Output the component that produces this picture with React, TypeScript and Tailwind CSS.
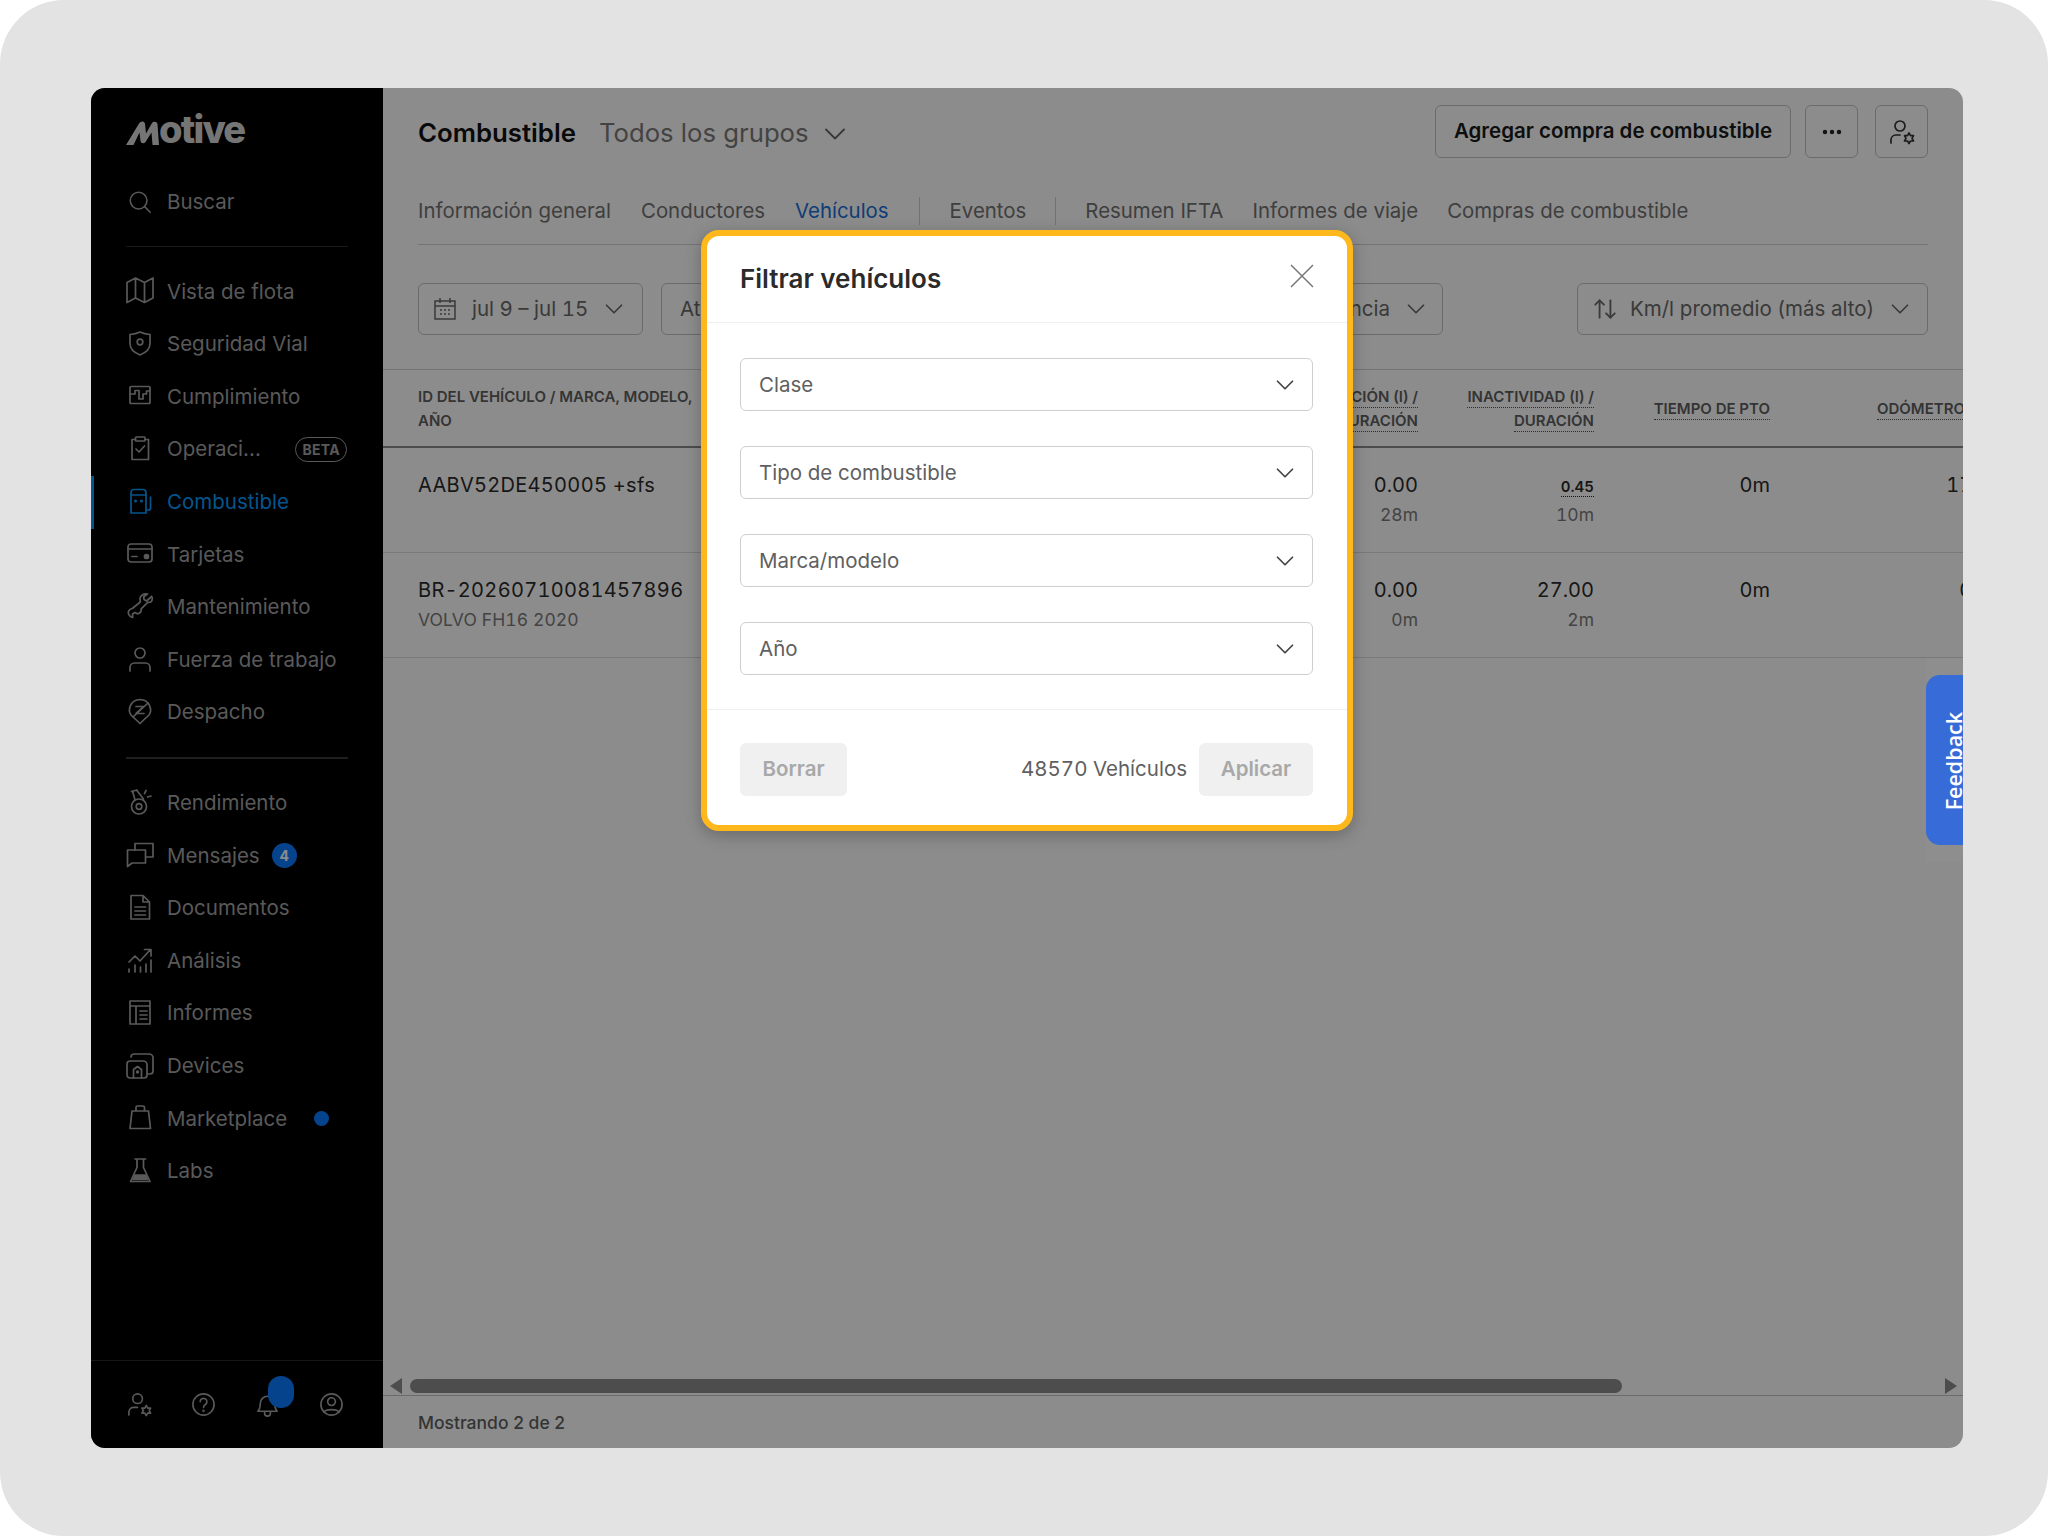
import type { ReactNode } from "react";
import { ChevronDown, ArrowUpDown, MoreHorizontal } from "lucide-react";

function Ico({ size = 28, children }: { size?: number; children: ReactNode }) {
  return (
    <svg
      width={size}
      height={size}
      viewBox="0 0 28 28"
      fill="none"
      stroke="currentColor"
      strokeWidth="1.7"
      strokeLinecap="round"
      strokeLinejoin="round"
    >
      {children}
    </svg>
  );
}

const icons: Record<string, ReactNode> = {
  map: (
    <path d="M1 6.500 9.500 2l9 4.500L27 2v20l-8.500 4.500-9-4.500L1 26.500zM9.500 2v20M18.500 6.500v20" />
  ),
  shield: (
    <>
      <path d="M4 5.500C10 5 12 4 14 3c2 1 4 2 10 2.500v9C24 20 19 24 14 26 9 24 4 20 4 14.500z" />
      <circle cx="14" cy="13" r="2.800" />
    </>
  ),
  compliance: (
    <>
      <rect x="4" y="4.500" width="20" height="17" rx="1" />
      <path d="M4 12h5V8.500h4V17h4v-5h3.500V9H24" />
    </>
  ),
  clipboard: (
    <>
      <path d="M9.500 5.500H6v20h16.500v-20H19" />
      <rect x="9.500" y="3" width="9.500" height="4" rx="0.800" />
      <path d="m10 15 3 3 5.500-6" />
    </>
  ),
  fuel: (
    <>
      <path d="M5 5.500A3 3 0 0 1 8 2.500h9a3 3 0 0 1 3 3v20.500H5zM5 8h15" />
      <path d="M20 23h2.500a2 2 0 0 0 2-2V10" />
      <circle cx="9.500" cy="14" r="0.700" />
      <circle cx="15.500" cy="14" r="0.700" />
    </>
  ),
  card: (
    <>
      <rect x="2" y="5" width="24" height="18" rx="3" />
      <path d="M2 10h24M6 17.500h5" />
      <circle cx="20.500" cy="17.500" r="2" fill="currentColor" />
    </>
  ),
  wrench: (
    <path d="M24.500 5.500 20.500 9 18 7.500l-.3-2.800 3.800-2.700c-3.500-.8-7 1-7.500 4.500-.2 1.500.3 2.500.3 3.500l-8 6.500c-3 .4-4.500 3-3.800 5.300.8 2.600 3.300 3.700 4.200 3.700l-.2-3.500 2.300-1.500 2.600 1.300c2.600-.4 4-2.300 3.800-5l6.500-6.500c3.300.8 6-2.500 3.800-6z" />
  ),
  user: (
    <>
      <circle cx="14" cy="8" r="5" />
      <path d="M4 26v-3.500A4.500 4.500 0 0 1 8.500 18h11a4.500 4.500 0 0 1 4.500 4.500V26" />
    </>
  ),
  dispatch: (
    <>
      <path d="M14 26.500 5 18C1.500 13 4 3 14 2.500 24 3 26.500 13 23 18z" />
      <path d="M10 9.500h8l-8 7h8M22 6 7 20" />
    </>
  ),
  medal: (
    <>
      <circle cx="13" cy="18.500" r="7.500" />
      <circle cx="13" cy="18.500" r="2.800" />
      <path d="M6.500 3 9 12M10.500 2l7 9M5.500 3.500 11 2M20 2.500l-1.500 3M25 8l-3.500 1" />
    </>
  ),
  messages: (
    <>
      <path d="M9 10V3.500h18v13.500h-7" />
      <path d="M1.500 10h18v13H6l-4.500 3.500z" />
    </>
  ),
  doc: (
    <path d="M5 2.500h12l6.500 6.500v17H5zM17 2.500V9h6.500M9 14h10.500M9 18h10.500M9 22h10.500" />
  ),
  chart: (
    <path d="m3 16 6-6 5 5 10-11M18.500 3.500H25V10M3 26v-3M9 26v-7M14.500 26v-5M20 26v-8M25 26V14" />
  ),
  table: (
    <path d="M4 3h20v23H4zM4 8h20M10 8v18M14 13h7M14 17h7M14 21h7" />
  ),
  devices: (
    <>
      <path d="M5 6a3 3 0 0 1 3-3h15a4 4 0 0 1 4 4v13a3 3 0 0 1-3 3h-2" />
      <path d="M1 13a3 3 0 0 1 3-3h13a4 4 0 0 1 4 4v10a3 3 0 0 1-3 3H4a3 3 0 0 1-3-3z" />
      <path d="M7.500 27v-8.500l4-3 4 3V27" />
      <circle cx="11.500" cy="21" r="0.800" />
    </>
  ),
  bag: (
    <path d="M6 8h16.500L24.500 25.500H4zM10 8V4.500a1.500 1.500 0 0 1 1.500-1.500h5.500a1.500 1.500 0 0 1 1.500 1.500V8" />
  ),
  flask: (
    <>
      <path d="M9 3h10.500M11 3v8.500L4.500 25.500h19.500L17.500 11.500V3" />
      <path d="M9 19h10.500l2 4.500H7z" fill="currentColor" />
    </>
  ),
  search: (
    <>
      <circle cx="12.500" cy="12.500" r="9" />
      <path d="m19 19 6 6" />
    </>
  ),
  help: (
    <>
      <circle cx="14" cy="14" r="11" />
      <path d="M10.500 11a3.500 3.500 0 1 1 5.500 3c-1.300.9-2 1.500-2 3" />
      <circle cx="14" cy="20.500" r="0.500" />
    </>
  ),
  bell: (
    <path d="M4 21c2-2 2.500-3.500 2.500-8a7.500 7.500 0 0 1 15 0c0 4.500.5 6 2.500 8zM11 21v2a3 3 0 0 0 6 0v-2" />
  ),
  account: (
    <>
      <circle cx="14" cy="14" r="11" />
      <circle cx="14" cy="11" r="4" />
      <path d="M6 22c2-3.500 14-3.500 16 0" />
    </>
  ),
  admin: (
    <>
      <circle cx="12" cy="8" r="5" />
      <path d="M3 25v-3.500A5 5 0 0 1 8 17h4" />
      <path d="m21 15 1.500 2.700h3l-1.500 2.600 1.500 2.700h-3L21 25.500 19.500 23h-3l1.500-2.700-1.500-2.600h3z" />
    </>
  ),
};

type NavItem = { icon: string; label: string; extra?: ReactNode; active?: boolean };

const mainNav: NavItem[] = [
  { icon: "map", label: "Vista de flota" },
  { icon: "shield", label: "Seguridad Vial" },
  { icon: "compliance", label: "Cumplimiento" },
  {
    icon: "clipboard",
    label: "Operaci...",
    extra: (
      <span className="ml-auto mr-[36px] rounded-full border border-[#a3a3a3] px-[6px] text-[14px] leading-[23px] font-bold tracking-[0.3px]">
        BETA
      </span>
    ),
  },
  { icon: "fuel", label: "Combustible", active: true },
  { icon: "card", label: "Tarjetas" },
  { icon: "wrench", label: "Mantenimiento" },
  { icon: "user", label: "Fuerza de trabajo" },
  { icon: "dispatch", label: "Despacho" },
];

const secondNav: NavItem[] = [
  { icon: "medal", label: "Rendimiento" },
  {
    icon: "messages",
    label: "Mensajes",
    extra: (
      <span className="ml-3 flex h-[25px] w-[25px] items-center justify-center rounded-full bg-[#0a7dff] text-[14px] font-bold text-white">
        4
      </span>
    ),
  },
  { icon: "doc", label: "Documentos" },
  { icon: "chart", label: "Análisis" },
  { icon: "table", label: "Informes" },
  { icon: "devices", label: "Devices" },
  {
    icon: "bag",
    label: "Marketplace",
    extra: <span className="ml-[27px] h-[15px] w-[15px] rounded-full bg-[#0a7dff]" />,
  },
  { icon: "flask", label: "Labs" },
];

function NavRow({ item }: { item: NavItem }) {
  return (
    <div
      className={`relative flex h-[52.6px] items-center pl-[35px] text-[20.5px] ${
        item.active ? "text-[#0a9bff]" : "text-[#a3a3a3]"
      }`}
    >
      {item.active && <span className="absolute top-0 left-0 h-full w-[3px] bg-[#0a9bff]" />}
      <span className="-mt-[3px] flex w-[28px] justify-center">
        <Ico>{icons[item.icon]}</Ico>
      </span>
      <span className="ml-[13px]">{item.label}</span>
      {item.extra}
    </div>
  );
}

function Sidebar() {
  return (
    <aside className="flex w-[292px] shrink-0 flex-col bg-black">
      <div className="flex h-[80px] shrink-0 items-start pt-[23px] pl-[35px] text-[#d6d6d6]">
        <div className="flex items-end">
          <svg width="33" height="25" viewBox="0 0 33 25" className="mb-[2px]" fill="currentColor">
            <path d="M0 25 13 3.500C14.500 1 18 .5 19 3.500l1 10L26 3c1.500-2 5-1.800 5.500 1L33 25h-6.500l-1-12.500-6 9.500c-1.500 2-4.500 1.500-5-1l-1-8.500L7.500 25z" />
          </svg>
          <span className="text-[38px] leading-[36px] font-extrabold tracking-[-1.8px]">otive</span>
        </div>
      </div>
      <div className="flex h-[68px] shrink-0 items-center pl-[35px] text-[20.5px] text-[#a3a3a3]">
        <span className="flex w-[28px] justify-center">
          <Ico size={26}>{icons.search}</Ico>
        </span>
        <span className="ml-[13px]">Buscar</span>
      </div>
      <div className="mt-[10px] ml-[35px] h-px w-[222px] shrink-0 bg-[#2f2f2f]" />
      <div className="mt-[18.700px]">
        {mainNav.map((n) => (
          <NavRow key={n.label} item={n} />
        ))}
      </div>
      <div className="my-[18px] ml-[35px] h-[2px] w-[222px] shrink-0 bg-[#3a3a3a]" />
      <div>
        {secondNav.map((n) => (
          <NavRow key={n.label} item={n} />
        ))}
      </div>
      <div className="mt-auto flex h-[88px] items-center gap-[37px] border-t border-[#2a2a2a] pl-[35px] text-[#a3a3a3]">
        <Ico size={27}>{icons.admin}</Ico>
        <Ico size={27}>{icons.help}</Ico>
        <div className="relative">
          <Ico size={27}>{icons.bell}</Ico>
          <span className="absolute -top-[15px] left-[14px] h-[32px] w-[26px] rounded-full bg-[#0a7dff]" />
        </div>
        <Ico size={27}>{icons.account}</Ico>
      </div>
    </aside>
  );
}

function Header({ className, children }: { className?: string; children: ReactNode }) {
  return (
    <div className={className}>
      <span className="border-b border-dotted border-[#555] pb-px">{children}</span>
    </div>
  );
}

function Main() {
  const tabClass = "text-[20.4px] text-[#737373]";
  const btn = "flex h-[52px] items-center rounded-[6px] border border-[#c4c4c4] bg-white";
  return (
    <main className="flex min-w-0 flex-1 flex-col overflow-hidden bg-white">
      <div className="flex h-[70px] shrink-0 items-end pr-[35px] pl-[35px]">
        <div className="mb-[5px] flex items-center">
          <span className="text-[25.800px] font-semibold text-[#111]">Combustible</span>
          <span className="ml-[23px] text-[25.700px] text-[#7a7a7a]">Todos los grupos</span>
          <ChevronDown className="ml-[8px] text-[#666]" size={36} strokeWidth={1.2} />
        </div>
        <div className="ml-auto flex gap-[14px]">
          <div className="flex h-[53px] w-[356px] items-center justify-center rounded-[6px] border border-[#c4c4c4] text-[20.5px] font-semibold text-[#1a1a1a]">
            Agregar compra de combustible
          </div>
          <div className="flex h-[53px] w-[53px] items-center justify-center rounded-[6px] border border-[#c4c4c4] text-[#222]">
            <MoreHorizontal size={24} strokeWidth={2.4} />
          </div>
          <div className="ml-[3px] flex h-[53px] w-[53px] items-center justify-center rounded-[6px] border border-[#c4c4c4] text-[#333]">
            <Ico size={28}>{icons.admin}</Ico>
          </div>
        </div>
      </div>

      <div className="mx-[35px] mt-[20px] flex h-[67px] shrink-0 items-center border-b border-[#d4d4d4]">
        <span className={tabClass}>Información general</span>
        <span className={`${tabClass} ml-[30px]`}>Conductores</span>
        <span className="ml-[30px] text-[20.4px] text-[#1a6fd8]">Vehículos</span>
        <span className="ml-[30px] h-[28px] w-px bg-[#cfcfcf]" />
        <span className={`${tabClass} ml-[30px]`}>Eventos</span>
        <span className="ml-[29px] h-[28px] w-px bg-[#cfcfcf]" />
        <span className={`${tabClass} ml-[29px]`}>Resumen IFTA</span>
        <span className={`${tabClass} ml-[29px]`}>Informes de viaje</span>
        <span className={`${tabClass} ml-[29px]`}>Compras de combustible</span>
      </div>

      <div className="mx-[35px] mt-[38px] flex shrink-0 items-center text-[20.5px] text-[#6a6a6a]">
        <div className={`${btn} w-[225px] pl-[14px]`}>
          <svg width="24" height="24" viewBox="0 0 24 24" fill="none" stroke="currentColor" strokeWidth="1.500">
            <path d="M2 4h20v18H2zM2 9h20M7 1v5M17 1v5" />
            <path d="M7 13h2M11 13h2M15 13h2M7 17h2M11 17h2M15 17h2" />
          </svg>
          <span className="ml-[15px] tabular-nums">jul 9 – jul 15</span>
          <ChevronDown className="ml-[11px]" size={30} strokeWidth={1.4} />
        </div>
        <div className={`${btn} ml-[18px] w-[100px] pl-[18px]`}>At</div>
        <div className={`${btn} ml-[320px] w-[362px] justify-end pr-[11px]`}>
          <span>Eficiencia</span>
          <ChevronDown className="ml-[11px]" size={30} strokeWidth={1.4} />
        </div>
        <div className={`${btn} ml-auto w-[351px] pl-[14px]`}>
          <ArrowUpDown size={26} strokeWidth={1.7} />
          <span className="ml-[12px]">Km/l promedio (más alto)</span>
          <ChevronDown className="ml-[11px]" size={30} strokeWidth={1.4} />
        </div>
      </div>

      <div className="mt-[34px] flex h-[79px] shrink-0 items-center border-t border-b-2 border-t-[#d4d4d4] border-b-[#8a8a8a] pt-[2px] text-[15px] leading-[24px] font-semibold text-[#5f5f5f]">
        <div className="w-[859px] shrink-0 pl-[35px]">
          ID DEL VEHÍCULO / MARCA, MODELO,
          <br />
          AÑO
        </div>
        <Header className="w-[176px] shrink-0 text-right">
          CONDUCCIÓN (I) /<br />
          DURACIÓN
        </Header>
        <Header className="w-[176px] shrink-0 text-right">
          INACTIVIDAD (I) /<br />
          DURACIÓN
        </Header>
        <Header className="w-[176px] shrink-0 text-right">TIEMPO DE PTO</Header>
        <Header className="w-[195px] shrink-0 text-right">ODÓMETRO</Header>
      </div>

      <Row
        id="AABV52DE450005 +sfs"
        a="0.00"
        aSub="28m"
        b={<span className="border-b border-dotted border-[#222] text-[15px] font-semibold">0.45</span>}
        bSub="10m"
        odo="17 km"
      />
      <Row id="BR-20260710081457896" sub="VOLVO FH16 2020" a="0.00" aSub="0m" b="27.00" bSub="2m" odo="0 km" />

      <div className="mt-auto flex h-[27px] shrink-0 items-end border-b border-[#c4c4c4] pr-[6px] pb-[1px] pl-[7px]">
        <span className="h-0 w-0 border-y-[8px] border-r-[12px] border-y-transparent border-r-[#8c8c8c]" />
        <span className="mb-[1px] ml-[8px] h-[14px] w-[1212px] rounded-full bg-[#8c8c8c]" />
        <span className="ml-auto h-0 w-0 border-y-[8px] border-l-[12px] border-y-transparent border-l-[#8c8c8c]" />
      </div>
      <div className="flex h-[52px] shrink-0 items-center pt-[2px] pl-[35px] text-[17.500px] font-medium text-[#5f5f5f]">
        Mostrando 2 de 2
      </div>
    </main>
  );
}

function Row(props: {
  id: string;
  sub?: string;
  a: string;
  aSub: string;
  b: ReactNode;
  bSub: string;
  odo: string;
}) {
  const sub = "text-[17.500px] leading-[24px] text-[#7a7a7a]";
  return (
    <div className="flex h-[105px] shrink-0 border-b border-[#dcdcdc] pt-[22px] text-[20px] leading-[30px] text-[#2b2b2b] tabular-nums">
      <div className="w-[859px] shrink-0 pl-[35px]">
        <div className="tracking-[0.3px]">{props.id}</div>
        {props.sub && <div className={`${sub} mt-[3px] tracking-[0.1px]`}>{props.sub}</div>}
      </div>
      <div className="w-[176px] shrink-0 text-right">
        <div className="h-[30px]">{props.a}</div>
        <div className={`${sub} mt-[3px]`}>{props.aSub}</div>
      </div>
      <div className="w-[176px] shrink-0 text-right">
        <div className="h-[30px]">{props.b}</div>
        <div className={`${sub} mt-[3px]`}>{props.bSub}</div>
      </div>
      <div className="w-[176px] shrink-0 text-right">0m</div>
      <div className="w-[236px] shrink-0 text-right">{props.odo}</div>
    </div>
  );
}

function Select({ label }: { label: string }) {
  return (
    <div className="flex h-[53px] items-center justify-between rounded-[6px] border-[1.500px] border-[#cfcfcf] bg-white pr-[12px] pl-[18px] text-[20.5px] text-[#606060]">
      <span className="mt-[1px]">{label}</span>
      <ChevronDown size={30} strokeWidth={1.4} className="text-[#444]" />
    </div>
  );
}

function FilterModal() {
  return (
    <div className="absolute top-[142px] left-[610px] z-20 w-[652px] rounded-[18px] border-[6px] border-[#ffb81c] bg-white shadow-[0_4px_16px_rgba(0,0,0,0.25)]">
      <div className="flex h-[87px] items-center justify-between border-b border-[#efefef] pr-[33px] pb-[2px] pl-[33px]">
        <span className="text-[26px] font-semibold text-[#2b2b2b]">Filtrar vehículos</span>
        <svg width="24" height="24" viewBox="0 0 24 24" className="-mt-[4px] text-[#777]" stroke="currentColor" strokeWidth="1.500">
          <path d="m1 1 22 22M23 1 1 23" />
        </svg>
      </div>
      <div className="flex flex-col gap-[35px] pt-[35px] pr-[34px] pb-[34px] pl-[33px]">
        <Select label="Clase" />
        <Select label="Tipo de combustible" />
        <Select label="Marca/modelo" />
        <Select label="Año" />
      </div>
      <div className="flex items-center border-t border-[#efefef] pt-[33px] pr-[34px] pb-[29px] pl-[33px]">
        <div className="flex h-[53px] w-[107px] items-center justify-center rounded-[6px] bg-[#f0f0f0] text-[20.5px] font-semibold text-[#a8a8a8]">
          Borrar
        </div>
        <span className="ml-auto text-[20.5px] text-[#606060] tabular-nums">48570 Vehículos</span>
        <div className="ml-[12px] flex h-[53px] w-[114px] items-center justify-center rounded-[6px] bg-[#f0f0f0] text-[20.5px] font-semibold text-[#a8a8a8]">
          Aplicar
        </div>
      </div>
    </div>
  );
}

export default function App() {
  return (
    <div className="h-[1536px] w-[2048px] bg-white font-['Inter',sans-serif]">
      <div className="h-full w-full rounded-[64px] bg-[#e3e3e3] pt-[88px] pl-[91px]">
        <div className="relative flex h-[1360px] w-[1872px] overflow-hidden rounded-[14px]">
          <Sidebar />
          <Main />
          <div className="absolute inset-0 z-10 bg-black/45" />
          <div className="absolute top-[570px] right-0 z-20 flex h-[204px] w-[37px] items-center bg-[#8e8e8e]">
            <div className="flex h-[170px] w-[37px] items-center justify-center overflow-hidden rounded-l-[14px] bg-[#366bd8]">
              <span className="mt-[2px] ml-[20px] -rotate-90 font-['Open_Sans',sans-serif] text-[21.500px] font-semibold text-white">
                Feedback
              </span>
            </div>
          </div>
          <FilterModal />
        </div>
      </div>
    </div>
  );
}
